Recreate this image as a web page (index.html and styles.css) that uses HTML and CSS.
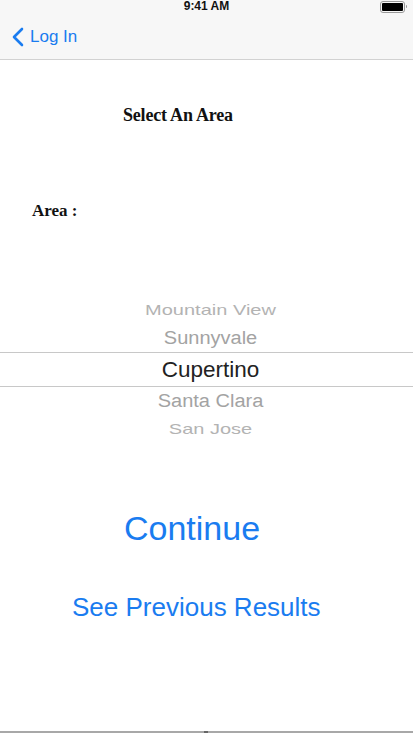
FILE: index.html
```html
<!DOCTYPE html>
<html>
<head>
<meta charset="utf-8">
<link rel="stylesheet" href="styles.css">
</head>
<body>
<div class="screen">
  <header class="topbar">
    <div class="status">
      <span class="time">9:41 AM</span>
      <span class="battery"><span class="battery-fill"></span></span>
    </div>
    <nav class="nav">
      <a class="back">
        <svg class="chev" width="12" height="20" viewBox="0 0 12 20"><path d="M10 2 L2 10 L10 18" fill="none" stroke="#1a7cf0" stroke-width="2.6" stroke-linecap="round" stroke-linejoin="round"/></svg>
        <span>Log In</span>
      </a>
    </nav>
  </header>
  <main class="content">
    <h1 class="title">Select An Area</h1>
    <div class="label">Area :</div>
    <div class="picker">
      <div class="pick far"><span>Mountain View</span></div>
      <div class="pick near"><span>Sunnyvale</span></div>
      <div class="pick sel"><span>Cupertino</span></div>
      <div class="pick near"><span>Santa Clara</span></div>
      <div class="pick far"><span>San Jose</span></div>
    </div>
    <div class="btn-continue">Continue</div>
    <div class="btn-prev">See Previous Results</div>
  </main>
  <div class="home"><span class="home-tick"></span></div>
</div>
</body>
</html>
```

FILE: styles.css
```css
html, body { margin: 0; padding: 0; background: #fff; }
body { font-family: "Liberation Sans", Arial, sans-serif; }
.screen { width: 413px; height: 733px; display: flex; flex-direction: column; overflow: hidden; }
.topbar { background: #f7f7f7; border-bottom: 1px solid #d2d2d2; box-sizing: border-box; height: 60px; }
.status { height: 15px; display: flex; justify-content: center; align-items: flex-start; position: relative; }
.time { font-size: 12px; font-weight: bold; color: #111; line-height: 12px; }
.battery { position: absolute; right: 8px; top: 1px; width: 21px; height: 8px; border: 1px solid #999; border-radius: 3px; padding: 1px; box-sizing: content-box; }
.battery::after { content: ""; position: absolute; right: -3px; top: 3px; width: 1px; height: 3px; background: #999; border-radius: 0 1px 1px 0; }
.battery-fill { display: block; width: 100%; height: 100%; background: #000; border-radius: 1px; }
.nav { height: 44px; display: flex; align-items: center; padding-left: 12px; }
.back { display: flex; align-items: center; gap: 6px; color: #1a7cf0; font-size: 17px; }
.chev { display: block; }
.content { flex: 1; display: flex; flex-direction: column; }
.title { margin: 45px 0 0 123px; font-family: "Liberation Serif", serif; font-weight: bold; font-size: 18px; line-height: 20px; color: #111; letter-spacing: -0.2px; }
.label { margin: 76px 0 0 32px; font-family: "Liberation Serif", serif; font-weight: bold; font-size: 17px; line-height: 20px; color: #111; }
.picker { margin-top: 75px; display: flex; flex-direction: column; }
.pick { text-align: center; height: 28px; line-height: 28px; padding-left: 8px; }
.pick span { display: inline-block; }
.far { font-size: 20px; color: #b3b3b3; }
.far span { transform: scaleY(0.72); }
.near { font-size: 20px; color: #a3a3a3; }
.near span { transform: scaleY(0.9); }
.sel { font-size: 22.5px; color: #222; height: 33px; line-height: 33px; border-top: 1px solid #c8c8c8; border-bottom: 1px solid #c8c8c8; }
.btn-continue { margin: 65px 0 0 124px; font-size: 34px; line-height: 40px; color: #1a7cf0; }
.btn-prev { margin: 43px 0 0 72px; font-size: 26px; line-height: 32px; color: #1a7cf0; }
.home { margin-top: auto; height: 2px; background: #a8a8a8; position: relative; }
.home-tick { position: absolute; left: 204px; top: 0; width: 4px; height: 2px; background: #666; }
```
